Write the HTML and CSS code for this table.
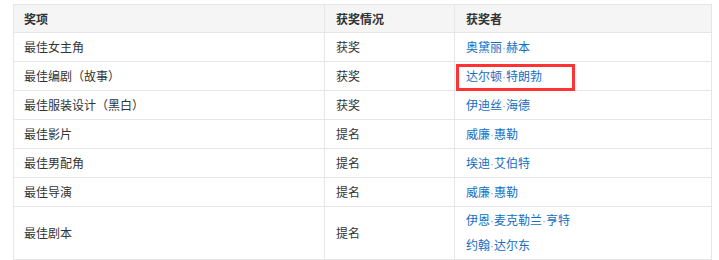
FILE: index.html
```html
<!DOCTYPE html>
<html lang="zh-CN">
<head>
<meta charset="utf-8">
<title>获奖记录</title>
<link rel="stylesheet" href="styles.css">
</head>
<body>
<table class="awards">
  <colgroup>
    <col class="c1">
    <col class="c2">
    <col class="c3">
  </colgroup>
  <thead>
    <tr><th>奖项</th><th>获奖情况</th><th>获奖者</th></tr>
  </thead>
  <tbody>
    <tr><td>最佳女主角</td><td>获奖</td><td><a class="name">奥黛丽<span class="dot">·</span>赫本</a></td></tr>
    <tr><td>最佳编剧（故事）</td><td>获奖</td><td class="marked"><a class="name">达尔顿<span class="dot">·</span>特朗勃</a><span class="highlight"></span></td></tr>
    <tr><td>最佳服装设计（黑白）</td><td>获奖</td><td><a class="name">伊迪丝<span class="dot">·</span>海德</a></td></tr>
    <tr><td>最佳影片</td><td>提名</td><td><a class="name">威廉<span class="dot">·</span>惠勒</a></td></tr>
    <tr><td>最佳男配角</td><td>提名</td><td><a class="name">埃迪<span class="dot">·</span>艾伯特</a></td></tr>
    <tr><td>最佳导演</td><td>提名</td><td><a class="name">威廉<span class="dot">·</span>惠勒</a></td></tr>
    <tr class="multi"><td>最佳剧本</td><td>提名</td><td>
      <div class="line"><a class="name">伊恩<span class="dot">·</span>麦克勒兰<span class="dot">·</span>亨特</a></div>
      <div class="line"><a class="name">约翰<span class="dot">·</span>达尔东</a></div>
    </td></tr>
  </tbody>
</table>
</body>
</html>
```
FILE: styles.css
```css
html, body {
  margin: 0;
  background: #fff;
}
body {
  padding: 4px 8px 0 13px;
  font-family: "Noto Sans CJK SC", "Liberation Sans", sans-serif;
  font-size: 12px;
  color: #333;
}
.awards {
  border-collapse: collapse;
  width: 698px;
  table-layout: fixed;
}
.c1 { width: 311px; }
.c2 { width: 130px; }
.c3 { width: 257px; }
.awards th,
.awards td {
  border: 1px solid #e6e6e6;
  text-align: left;
  vertical-align: middle;
  padding: 0 10px;
  height: 28px;
  line-height: 16px;
  overflow: visible;
}
.awards th {
  background: #f5f5f5;
  font-weight: bold;
  height: 27px;
}
.awards td + td,
.awards th + th {
  padding-left: 11px;
}
.name {
  color: #136ec2;
  text-decoration: none;
}
.dot {
  font-family: "Liberation Sans", sans-serif;
  color: #9aa8b8;
}
.awards .multi td {
  height: 52px;
}
.line {
  line-height: 23px;
}
.marked {
  position: relative;
}
.highlight {
  position: absolute;
  left: 1px;
  top: 2px;
  width: 119px;
  height: 27px;
  box-sizing: border-box;
  border: 3px solid #f33;
}
```
